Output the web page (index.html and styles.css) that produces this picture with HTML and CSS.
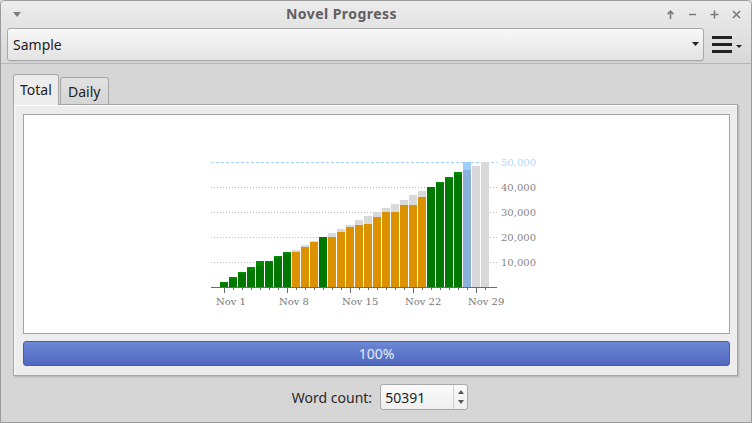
FILE: index.html
```html
<!DOCTYPE html>
<html lang="en">
<head>
<meta charset="utf-8">
<title>Novel Progress</title>
<link rel="stylesheet" href="styles.css">
</head>
<body>
<div class="window">
  <div class="header">
    <div class="titlebar">
      <svg class="tb-menu" width="8" height="5" viewBox="0 0 8 5"><path d="M0 0H8L4 5Z" fill="#7d7d7d"/></svg>
      <div class="title">Novel Progress</div>
      <div class="tb-buttons">
        <span class="tb-btn"><svg width="9" height="9" viewBox="0 0 9 9"><path d="M4.5 9V1.2M1.6 4.1L4.5 1.2L7.4 4.1" fill="none" stroke="#7b7b7b" stroke-width="1.6"/></svg></span>
        <span class="tb-btn"><svg width="9" height="9" viewBox="0 0 9 9"><path d="M1 4.5H8" fill="none" stroke="#7b7b7b" stroke-width="1.6"/></svg></span>
        <span class="tb-btn"><svg width="9" height="9" viewBox="0 0 9 9"><path d="M0.5 4.5H8.5M4.5 0.5V8.5" fill="none" stroke="#7b7b7b" stroke-width="1.6"/></svg></span>
        <span class="tb-btn"><svg width="9" height="9" viewBox="0 0 9 9"><path d="M1 1L8 8M8 1L1 8" fill="none" stroke="#7b7b7b" stroke-width="1.6"/></svg></span>
      </div>
    </div>
    <div class="toolbar">
      <div class="combo">
        <span class="combo-text">Sample</span>
        <svg class="combo-arrow" width="7" height="4" viewBox="0 0 7 4"><path d="M0 0H7L3.5 4Z" fill="#222"/></svg>
      </div>
      <div class="menu-btn">
        <svg width="31" height="17" viewBox="0 0 31 17"><rect x="0" y="0" width="20" height="3" fill="#222"/><rect x="0" y="7" width="20" height="3" fill="#222"/><rect x="0" y="14" width="20" height="3" fill="#222"/><path d="M24 9H30L27 12Z" fill="#222"/></svg>
      </div>
    </div>
  </div>

  <div class="main">
    <div class="tabbar">
      <div class="tab active">Total</div>
      <div class="tab">Daily</div>
    </div>
    <div class="pane">
      <div class="chart">
        <svg width="705" height="218" viewBox="24 115 705 218">
          <g stroke="#bdbdbd" stroke-dasharray="1 2" stroke-width="1">
            <line x1="211" y1="187.5" x2="497" y2="187.5"/>
            <line x1="211" y1="212.5" x2="497" y2="212.5"/>
            <line x1="211" y1="237.5" x2="497" y2="237.5"/>
            <line x1="211" y1="262.5" x2="497" y2="262.5"/>
          </g>
          <line x1="211" y1="162.5" x2="497" y2="162.5" stroke="#a3d0ff" stroke-width="1" stroke-dasharray="3 2"/>
          <g>
            <rect x="220" y="282" width="8" height="1" fill="#008b00"/><rect x="220" y="283" width="8" height="4" fill="#007800"/>
            <rect x="229" y="277" width="8" height="2" fill="#008b00"/><rect x="229" y="279" width="8" height="8" fill="#007800"/>
            <rect x="238" y="272" width="8" height="2" fill="#008b00"/><rect x="238" y="274" width="8" height="13" fill="#007800"/>
            <rect x="247" y="267" width="8" height="3" fill="#008b00"/><rect x="247" y="270" width="8" height="17" fill="#007800"/>
            <rect x="256" y="261" width="8" height="5" fill="#008b00"/><rect x="256" y="266" width="8" height="21" fill="#007800"/>
            <rect x="265" y="261" width="8" height="1" fill="#008b00"/><rect x="265" y="262" width="8" height="25" fill="#007800"/>
            <rect x="274" y="256" width="8" height="2" fill="#008b00"/><rect x="274" y="258" width="8" height="29" fill="#007800"/>
            <rect x="283" y="252" width="8" height="2" fill="#008b00"/><rect x="283" y="254" width="8" height="33" fill="#007800"/>
            <rect x="292" y="250" width="8" height="37" fill="#d9d9d9"/><rect x="292" y="252" width="8" height="35" fill="#db9100"/>
            <rect x="301" y="245" width="8" height="42" fill="#d9d9d9"/><rect x="301" y="247" width="8" height="40" fill="#db9100"/>
            <rect x="310" y="241" width="8" height="46" fill="#d9d9d9"/><rect x="310" y="242" width="8" height="45" fill="#db9100"/>
            <rect x="319" y="237" width="8" height="50" fill="#007800"/>
            <rect x="328" y="233" width="8" height="54" fill="#d9d9d9"/><rect x="328" y="237" width="8" height="50" fill="#db9100"/>
            <rect x="337" y="229" width="8" height="58" fill="#d9d9d9"/><rect x="337" y="232" width="8" height="55" fill="#db9100"/>
            <rect x="346" y="225" width="8" height="62" fill="#d9d9d9"/><rect x="346" y="227" width="8" height="60" fill="#db9100"/>
            <rect x="355" y="220" width="8" height="67" fill="#d9d9d9"/><rect x="355" y="225" width="8" height="62" fill="#db9100"/>
            <rect x="364" y="216" width="8" height="71" fill="#d9d9d9"/><rect x="364" y="224" width="8" height="63" fill="#db9100"/>
            <rect x="373" y="212" width="8" height="75" fill="#d9d9d9"/><rect x="373" y="217" width="8" height="70" fill="#db9100"/>
            <rect x="382" y="208" width="8" height="79" fill="#d9d9d9"/><rect x="382" y="212" width="8" height="75" fill="#db9100"/>
            <rect x="391" y="204" width="8" height="83" fill="#d9d9d9"/><rect x="391" y="212" width="8" height="75" fill="#db9100"/>
            <rect x="400" y="200" width="8" height="87" fill="#d9d9d9"/><rect x="400" y="205" width="8" height="82" fill="#db9100"/>
            <rect x="409" y="195" width="8" height="92" fill="#d9d9d9"/><rect x="409" y="205" width="8" height="82" fill="#db9100"/>
            <rect x="418" y="191" width="8" height="96" fill="#d9d9d9"/><rect x="418" y="197" width="8" height="90" fill="#db9100"/>
            <rect x="427" y="187" width="8" height="100" fill="#007800"/>
            <rect x="436" y="182" width="8" height="1" fill="#008b00"/><rect x="436" y="183" width="8" height="104" fill="#007800"/>
            <rect x="445" y="177" width="8" height="2" fill="#008b00"/><rect x="445" y="179" width="8" height="108" fill="#007800"/>
            <rect x="454" y="172" width="8" height="3" fill="#008b00"/><rect x="454" y="175" width="8" height="112" fill="#007800"/>
            <rect x="463" y="162" width="8" height="8" fill="#9ecdff"/><rect x="463" y="170" width="8" height="117" fill="#8ab0de"/>
            <rect x="472" y="166" width="8" height="121" fill="#d9d9d9"/>
            <rect x="481" y="162" width="8" height="125" fill="#d9d9d9"/>
          </g>
          <rect x="211" y="287" width="286" height="1" fill="#6a6a6a"/>
          <g fill="#6a6a6a">
            <rect x="224" y="288" width="1" height="5"/>
            <rect x="233" y="288" width="1" height="2"/>
            <rect x="242" y="288" width="1" height="2"/>
            <rect x="251" y="288" width="1" height="2"/>
            <rect x="260" y="288" width="1" height="2"/>
            <rect x="269" y="288" width="1" height="2"/>
            <rect x="278" y="288" width="1" height="2"/>
            <rect x="287" y="288" width="1" height="5"/>
            <rect x="296" y="288" width="1" height="2"/>
            <rect x="305" y="288" width="1" height="2"/>
            <rect x="314" y="288" width="1" height="2"/>
            <rect x="323" y="288" width="1" height="2"/>
            <rect x="332" y="288" width="1" height="2"/>
            <rect x="341" y="288" width="1" height="2"/>
            <rect x="350" y="288" width="1" height="5"/>
            <rect x="359" y="288" width="1" height="2"/>
            <rect x="368" y="288" width="1" height="2"/>
            <rect x="377" y="288" width="1" height="2"/>
            <rect x="386" y="288" width="1" height="2"/>
            <rect x="395" y="288" width="1" height="2"/>
            <rect x="404" y="288" width="1" height="2"/>
            <rect x="413" y="288" width="1" height="5"/>
            <rect x="422" y="288" width="1" height="2"/>
            <rect x="431" y="288" width="1" height="2"/>
            <rect x="440" y="288" width="1" height="2"/>
            <rect x="449" y="288" width="1" height="2"/>
            <rect x="458" y="288" width="1" height="2"/>
            <rect x="467" y="288" width="1" height="2"/>
            <rect x="476" y="288" width="1" height="5"/>
            <rect x="485" y="288" width="1" height="2"/>
          </g>
          <g class="axis-x">
            <text x="216" y="305">Nov 1</text>
            <text x="279" y="305">Nov 8</text>
            <text x="342" y="305">Nov 15</text>
            <text x="405" y="305">Nov 22</text>
            <text x="468" y="305">Nov 29</text>
          </g>
          <g class="axis-y">
            <text class="goal" x="501" y="166">50,000</text>
            <text x="501" y="191">40,000</text>
            <text x="501" y="216">30,000</text>
            <text x="501" y="241">20,000</text>
            <text x="501" y="266">10,000</text>
          </g>
        </svg>
      </div>
      <div class="progress">100%</div>
    </div>
  </div>

  <div class="footer">
    <span class="label">Word count:</span>
    <div class="spin">
      <span class="spin-val">50391</span>
      <div class="spin-btns">
        <svg width="6" height="4" viewBox="0 0 6 4"><path d="M0 4H6L3 0Z" fill="#555"/></svg>
        <svg width="6" height="4" viewBox="0 0 6 4"><path d="M0 0H6L3 4Z" fill="#555"/></svg>
      </div>
    </div>
  </div>
</div>
</body>
</html>
```
FILE: styles.css
```css
* { box-sizing: border-box; }
html, body { margin: 0; padding: 0; }
body {
  width: 752px;
  height: 423px;
  overflow: hidden;
  background: #d6d6d6;
  font-family: "Noto Sans", "Open Sans", sans-serif;
  font-size: 14px;
  color: #222;
}
.window {
  width: 752px;
  height: 423px;
  border: 1px solid #9a9a9a;
  border-radius: 5px 5px 0 0;
  background: #d6d6d6;
  display: flex;
  flex-direction: column;
  overflow: hidden;
}
.header {
  height: 63px;
  flex: none;
  background: linear-gradient(#ececec, #d8d8d8);
  border-bottom: 1px solid #b5b5b5;
}
.titlebar {
  height: 26px;
  display: flex;
  align-items: center;
  padding: 0 7px 0 12px;
}
.tb-menu { display: block; flex: none; }
.title {
  flex: 1;
  text-align: center;
  font-weight: bold;
  font-size: 14px;
  letter-spacing: 0.45px;
  color: #606060;
  line-height: 26px;
}
.tb-buttons { display: flex; gap: 6px; }
.tb-btn {
  width: 16px;
  height: 16px;
  display: flex;
  align-items: center;
  justify-content: center;
}
.tb-btn svg { display: block; }
.toolbar {
  height: 36px;
  display: flex;
  align-items: flex-start;
  padding: 1px 0 0 6px;
}
.combo {
  width: 697px;
  height: 33px;
  display: flex;
  align-items: center;
  padding: 0 4px 1px 5px;
  border: 1px solid #a9a9a9;
  border-radius: 3px;
  background: linear-gradient(#f8f8f8, #e3e3e3);
  box-shadow: 0 1px 0 rgba(0,0,0,0.08);
}
.combo-text { flex: 1; font-size: 14px; color: #1e1e1e; }
.combo-arrow { display: block; }
.menu-btn {
  margin: 8px 0 0 8px;
  width: 31px;
  height: 17px;
}
.menu-btn svg { display: block; }
.main {
  padding: 10px 13px 0 12px;
  flex: none;
}
.tabbar {
  display: flex;
  align-items: flex-end;
  height: 30px;
  gap: 1px;
}
.tab {
  display: flex;
  align-items: center;
  border: 1px solid #a6a6a6;
  border-bottom: none;
  border-radius: 3px 3px 0 0;
  font-size: 14px;
  color: #222;
}
.tab.active {
  width: 46px;
  height: 31px;
  margin-bottom: -1px;
  padding-left: 6px;
  padding-bottom: 1px;
  background: #ededed;
  position: relative;
  z-index: 1;
}
.tab:not(.active) {
  width: 49px;
  height: 27px;
  padding-left: 7px;
  background: linear-gradient(#e2e2e2, #d5d5d5);
}
.pane {
  border: 1px solid #a5a5a5;
  background: #ededed;
  padding: 9px 7px 9px 9px;
  box-shadow: inset 1px 1px 0 #fbfbfb, 1px 1px 0 #bcbcbc, 2px 2px 0 #c9c9c9;
}
.chart {
  height: 220px;
  border: 1px solid #a4a4a4;
  background: #fff;
}
.chart svg { display: block; }
.axis-x text {
  font-family: "DejaVu Serif", serif;
  font-size: 10px;
  fill: #777;
}
.axis-y text {
  font-family: "DejaVu Serif", serif;
  font-size: 10px;
  fill: #858585;
}
.axis-y text.goal { fill: #aed5ff; }
.progress {
  margin-top: 7px;
  height: 25px;
  border: 1px solid #4a5d9e;
  border-radius: 3px;
  background: linear-gradient(#6d88d6, #5067be);
  display: flex;
  align-items: center;
  justify-content: center;
  padding-bottom: 1px;
  color: #e6ebf8;
  font-size: 14px;
}
.footer {
  display: flex;
  justify-content: center;
  align-items: center;
  gap: 8px;
  padding: 8px 0 0 8px;
}
.label { color: #2a2a2a; font-size: 14px; }
.spin {
  width: 88px;
  height: 26px;
  display: flex;
  border: 1px solid #a9a9a9;
  border-radius: 3px;
  background: linear-gradient(#fafafa, #efefef);
}
.spin-val {
  flex: 1;
  display: flex;
  align-items: center;
  padding-left: 4px;
  font-size: 14px;
  color: #1e1e1e;
}
.spin-btns {
  width: 14px;
  border-left: 1px solid #cfcfcf;
  display: flex;
  flex-direction: column;
  align-items: center;
  justify-content: space-between;
  padding: 5px 0 5px 0;
}
.spin-btns svg { display: block; }
```
